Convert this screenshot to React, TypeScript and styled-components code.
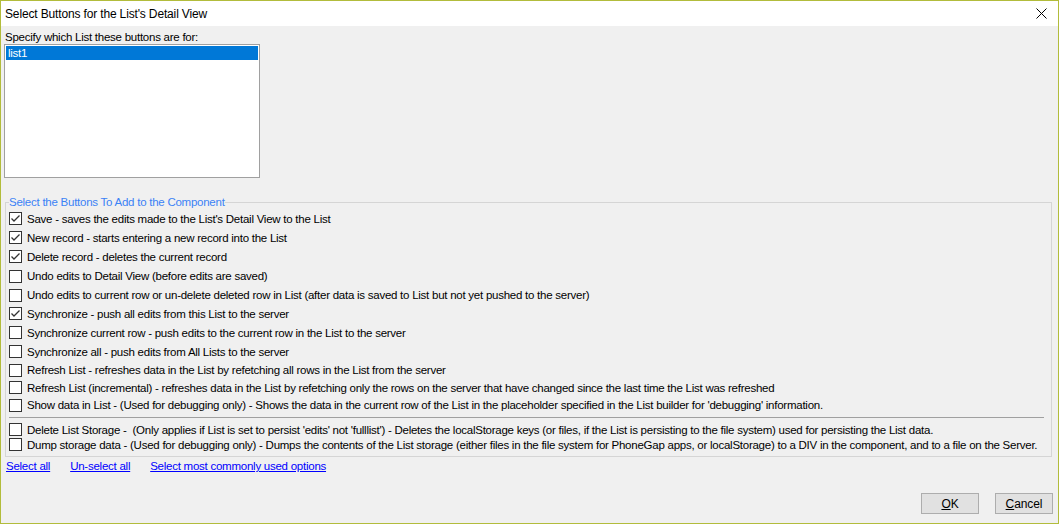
import React from "react";
import styled, { createGlobalStyle } from "styled-components";

const Global = createGlobalStyle`
  html, body { margin: 0; padding: 0; background: #ffffff; }
  body { font-family: "Liberation Sans", Arial, sans-serif; font-size: 11.5px; letter-spacing: -0.25px; color: #000; }
  * { box-sizing: border-box; }
`;

const Window = styled.div`
  width: 1059px;
  height: 524px;
  border: 1px solid #b2bc3b;
  display: flex;
  flex-direction: column;
  background: #f0f0f0;
  overflow: hidden;
`;

const TitleBar = styled.div`
  height: 25px;
  flex: none;
  background: #ffffff;
  display: flex;
  align-items: center;
  justify-content: space-between;
  padding: 0 10px 0 4px;
  font-size: 12px;
  letter-spacing: -0.15px;
`;

const CloseBox = styled.div`
  width: 12px;
  height: 12px;
  display: flex;
  align-items: center;
  justify-content: center;
  margin-right: 1px;
`;

const Body = styled.div`
  flex: 1;
  display: flex;
  flex-direction: column;
  padding: 5px 4px 9px 3px;
`;

const Label = styled.div`
  height: 13px;
  line-height: 13px;
  padding-left: 1px;
`;

const ListBox = styled.div`
  width: 256px;
  height: 134px;
  border: 1px solid #a0a0a0;
  background: #ffffff;
  padding: 1px;
`;

const ListItem = styled.div<{ $selected?: boolean }>`
  height: 14px;
  line-height: 14px;
  padding-left: 2px;
  background: ${(p) => (p.$selected ? "#0078d7" : "transparent")};
  color: ${(p) => (p.$selected ? "#ffffff" : "#000000")};
`;

const Group = styled.fieldset`
  margin: 18px 2px 0 1px;
  padding: 0 0 4px 0;
  border: 1px solid #d5d5d5;
  min-width: 0;
`;

const Legend = styled.legend`
  margin-left: 3px;
  padding: 0;
  color: #3b82f6;
  line-height: 13px;
  height: 13px;
`;

const Row = styled.label<{ $h: number }>`
  display: flex;
  align-items: center;
  height: ${(p) => p.$h}px;
  padding-left: 3px;
  white-space: pre;
`;

const Box = styled.span`
  width: 13px;
  height: 13px;
  flex: none;
  border: 1px solid #333333;
  background: #ffffff;
  margin-right: 5px;
  display: flex;
  align-items: center;
  justify-content: center;
`;

const Separator = styled.div`
  height: 1px;
  background: #a0a0a0;
  margin: 3px 7px 4px 3px;
`;

const Links = styled.div`
  display: flex;
  gap: 20px;
  margin-top: 2px;
  padding-left: 2px;
  height: 14px;
  line-height: 14px;
`;

const Link = styled.a`
  color: #0000ff;
  text-decoration: underline;
  cursor: pointer;
`;

const Footer = styled.div`
  margin-top: auto;
  display: flex;
  justify-content: flex-end;
  gap: 16px;
  padding-right: 1px;
`;

const Button = styled.button`
  width: 58px;
  height: 21px;
  background: #e1e1e1;
  border: 1px solid #adadad;
  font-family: inherit;
  font-size: 12px;
  letter-spacing: -0.1px;
  color: #000;
  padding: 0;
  u { text-decoration: underline; }
`;

const Check = ({ checked }: { checked: boolean }) => (
  <Box>
    {checked && (
      <svg width="11" height="11" viewBox="0 0 11 11">
        <polyline points="1.5,5.5 4,8 9.5,2.5" fill="none" stroke="#333" strokeWidth="1.3" />
      </svg>
    )}
  </Box>
);

const items: [string, boolean][] = [
  ["Save - saves the edits made to the List's Detail View to the List", true],
  ["New record - starts entering a new record into the List", true],
  ["Delete record - deletes the current record", true],
  ["Undo edits to Detail View (before edits are saved)", false],
  ["Undo edits to current row or un-delete deleted row in List (after data is saved to List but not yet pushed to the server)", false],
  ["Synchronize - push all edits from this List to the server", true],
  ["Synchronize current row - push edits to the current row in the List to the server", false],
  ["Synchronize all - push edits from All Lists to the server", false],
  ["Refresh List - refreshes data in the List by refetching all rows in the List from the server", false],
  ["Refresh List (incremental) - refreshes data in the List by refetching only the rows on the server that have changed since the last time the List was refreshed", false],
  ["Show data in List - (Used for debugging only) - Shows the data in the current row of the List in the placeholder specified in the List builder for 'debugging' information.", false],
];

const storage: string[] = [
  "Delete List Storage -  (Only applies if List is set to persist 'edits' not 'fulllist') - Deletes the localStorage keys (or files, if the List is persisting to the file system) used for persisting the List data.",
  "Dump storage data - (Used for debugging only) - Dumps the contents of the List storage (either files in the file system for PhoneGap apps, or localStorage) to a DIV in the component, and to a file on the Server.",
];

const heights = [19, 19, 19, 20, 18, 19, 19, 19, 18, 17, 18];

export default function App() {
  return (
    <>
      <Global />
      <Window>
        <TitleBar>
          <span>Select Buttons for the List's Detail View</span>
          <CloseBox>
            <svg width="11" height="11" viewBox="0 0 11 11">
              <path d="M0.5 0.5 L10.5 10.5 M10.5 0.5 L0.5 10.5" stroke="#000" strokeWidth="1" fill="none" />
            </svg>
          </CloseBox>
        </TitleBar>
        <Body>
          <Label>Specify which List these buttons are for:</Label>
          <ListBox>
            <ListItem $selected>list1</ListItem>
          </ListBox>
          <Group>
            <Legend>Select the Buttons To Add to the Component</Legend>
            {items.map(([t, c], i) => (
              <Row key={i} $h={heights[i]}>
                <Check checked={c} />
                {t}
              </Row>
            ))}
            <Separator />
            {storage.map((t, i) => (
              <Row key={i} $h={15}>
                <Check checked={false} />
                {t}
              </Row>
            ))}
          </Group>
          <Links>
            <Link>Select all</Link>
            <Link>Un-select all</Link>
            <Link>Select most commonly used options</Link>
          </Links>
          <Footer>
            <Button><u>O</u>K</Button>
            <Button><u>C</u>ancel</Button>
          </Footer>
        </Body>
      </Window>
    </>
  );
}
